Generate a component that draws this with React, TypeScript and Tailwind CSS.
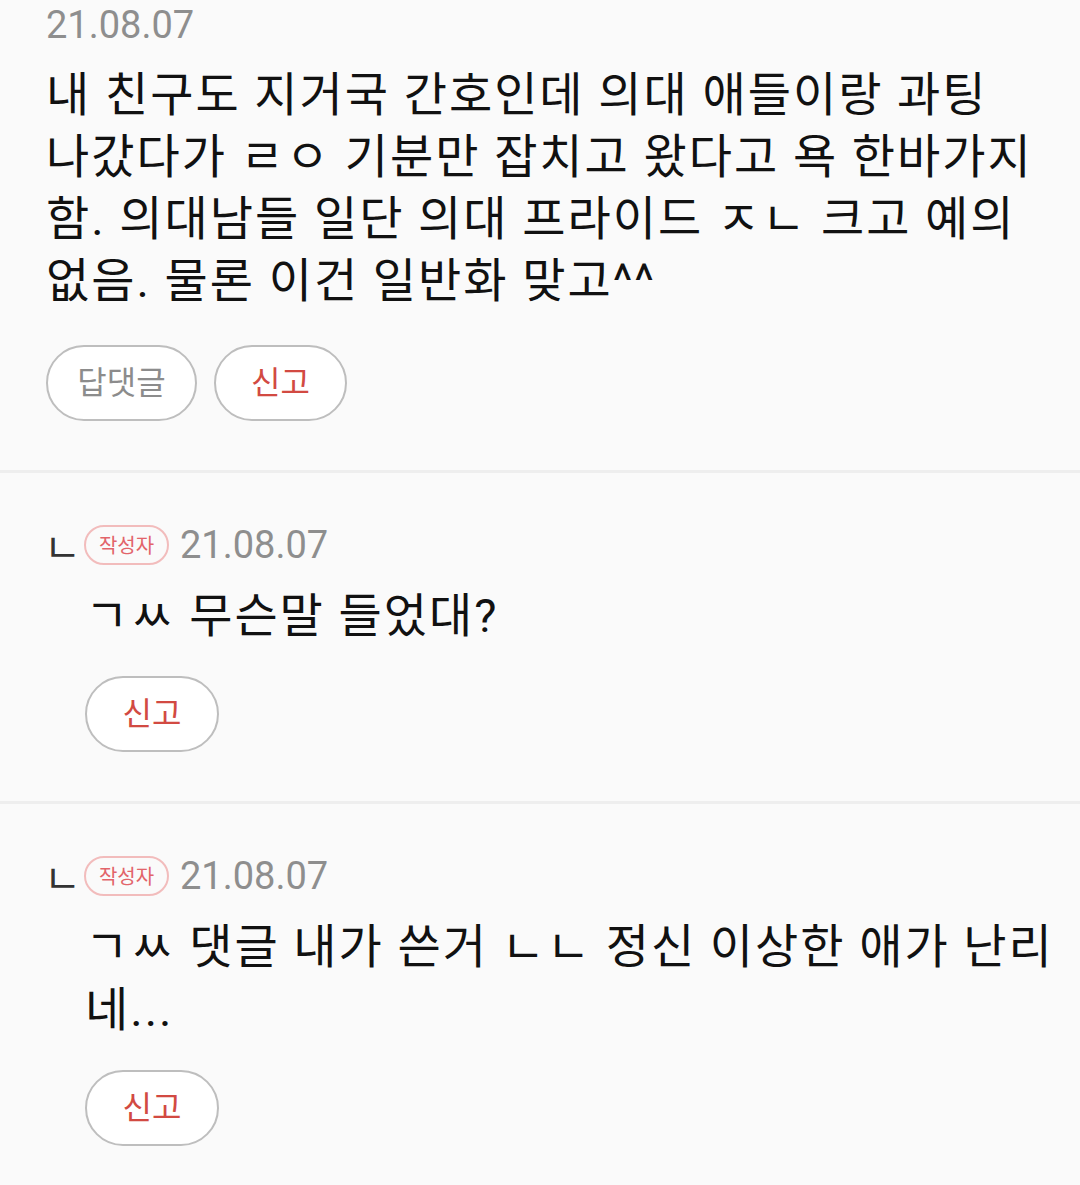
import React from "react";

const FONT = "font-['Roboto','Noto_Sans_CJK_KR',sans-serif]";

function Pill({ label, tone, width }: { label: string; tone: "gray" | "red"; width: string }) {
  return (
    <div
      className={`${width} h-[76px] rounded-full border-2 border-[#bebebe] bg-white flex items-center justify-center text-[32px] leading-none ${
        tone === "gray" ? "text-[#8c8c8c]" : "text-[#d24a42]"
      }`}
    >
      {label}
    </div>
  );
}

function Divider() {
  return <div className="h-[3px] bg-[#eeeeee]" />;
}

function Reply({ children }: { children: React.ReactNode }) {
  return (
    <div className="pt-[47px] pb-[49px]">
      <div className="h-[50px] flex items-center pl-[44px]">
        <span className="w-[40px] text-[40px] leading-none text-[#333333] font-['Noto_Sans_CJK_KR',sans-serif]">ㄴ</span>
        <span className="w-[85px] h-[40px] rounded-full border-2 border-[#f2bcbc] flex items-center justify-center text-[20px] leading-none text-[#e2646a] font-['Noto_Sans_CJK_KR',sans-serif]">
          작성자
        </span>
        <span className="ml-[11px] text-[38px] leading-[50px] text-[#8e8e8e] font-['Roboto',sans-serif]">21.08.07</span>
      </div>
      <div className="pl-[85px] pr-[20px]">
        <p className="mt-[14px] text-[47px] leading-[63px] tracking-[2px] break-keep text-[#111111]">{children}</p>
        <div className="mt-[29px] flex">
          <Pill label="신고" tone="red" width="w-[134px]" />
        </div>
      </div>
    </div>
  );
}

export default function App() {
  return (
    <div className={`w-[1080px] min-h-[1185px] bg-[#fafafa] ${FONT}`}>
      <div className="px-[46px] pb-[49px]">
        <div className="h-[50px] text-[38px] leading-[50px] text-[#8e8e8e] font-['Roboto',sans-serif]">21.08.07</div>
        <p className="mt-[14px] text-[47px] leading-[62px] tracking-[2px] break-keep text-[#111111]">
          내 친구도 지거국 간호인데 의대 애들이랑 과팅 나갔다가 ㄹㅇ 기분만 잡치고 왔다고 욕 한바가지 함. 의대남들 일단 의대 프라이드 ㅈㄴ 크고 예의 없음. 물론 이건 일반화 맞고^^
        </p>
        <div className="mt-[33px] flex gap-[17px]">
          <Pill label="답댓글" tone="gray" width="w-[151px]" />
          <Pill label="신고" tone="red" width="w-[133px]" />
        </div>
      </div>
      <Divider />
      <Reply>ㄱㅆ 무슨말 들었대?</Reply>
      <Divider />
      <Reply>
        ㄱㅆ 댓글 내가 쓴거 ㄴㄴ 정신 이상한 애가 난리<wbr />네...
      </Reply>
    </div>
  );
}
